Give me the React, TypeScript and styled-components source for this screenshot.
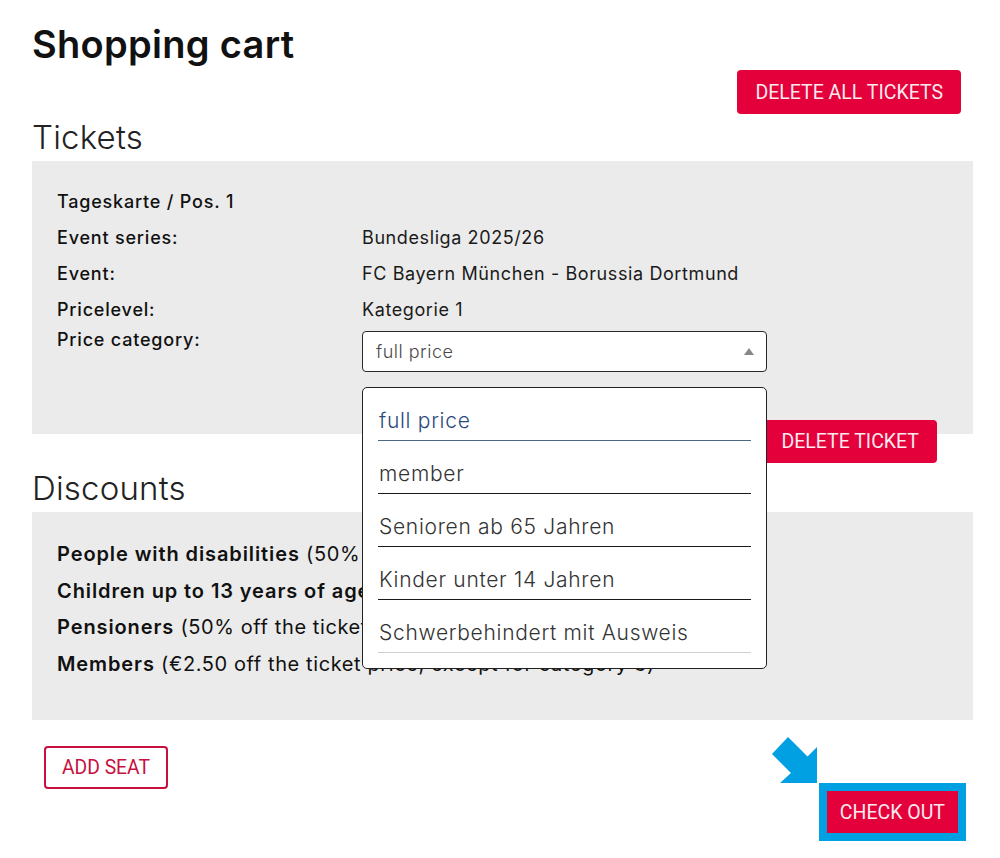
import styled, { createGlobalStyle } from "styled-components";

const GlobalStyle = createGlobalStyle`
  body {
    margin: 0;
    background: #fff;
    font-family: Inter, "Noto Sans", sans-serif;
    color: #111;
  }
`;

const Page = styled.div`
  width: 941px;
  padding: 22px 27px 0 32px;
`;

const Title = styled.h1`
  margin: 0;
  font-size: 38px;
  line-height: 44px;
  font-weight: 600;
  letter-spacing: 0.3px;
`;

const TopActions = styled.div`
  display: flex;
  justify-content: flex-end;
  padding-right: 12px;
  margin-top: 4px;
`;

const SectionTitle = styled.h2<{ $gap?: number }>`
  margin: ${(p) => p.$gap ?? 0}px 0 0;
  font-size: 33px;
  line-height: 47px;
  font-weight: 300;
  letter-spacing: 0.2px;
  color: #222;
`;

const RedButton = styled.button`
  background: #e4003b;
  color: #fbe9ee;
  border: none;
  border-radius: 4px;
  font-family: Roboto, "Liberation Sans", sans-serif;
  font-size: 19.5px;
  padding: 0 18px;
  height: 44px;
  cursor: pointer;
`;

const OutlineButton = styled.button`
  background: #fff;
  color: #c8103f;
  border: 2px solid #c8103f;
  border-radius: 4px;
  font-family: Roboto, "Liberation Sans", sans-serif;
  font-size: 19.3px;
  padding: 0 16px;
  height: 43px;
  cursor: pointer;
`;

const Panel = styled.div<{ $pad: string }>`
  position: relative;
  background: #ebebeb;
  padding: ${(p) => p.$pad};
`;

const InfoGrid = styled.div`
  display: grid;
  grid-template-columns: 305px 405px;
  align-items: start;
  font-size: 18px;
`;

const Label = styled.div<{ $lh?: number }>`
  font-weight: 500;
  letter-spacing: 0.8px;
  line-height: ${(p) => p.$lh ?? 36}px;
`;

const Value = styled.div`
  line-height: 36px;
  font-weight: 400;
  letter-spacing: 0.6px;
  color: #1a1a1a;
`;

const SelectWrap = styled.div`
  position: relative;
  margin-top: 3px;
`;

const SelectBox = styled.div`
  height: 39px;
  border: 1px solid #2a2a2a;
  border-radius: 4px;
  background: #fff;
  display: flex;
  align-items: center;
  justify-content: space-between;
  padding: 0 12px 0 13px;
  font-size: 18px;
  font-weight: 300;
  letter-spacing: 0.5px;
  color: #4a4a4a;
`;

const Caret = styled.span`
  width: 0;
  height: 0;
  border-left: 5px solid transparent;
  border-right: 5px solid transparent;
  border-bottom: 7px solid #888;
`;

const Dropdown = styled.ul`
  position: absolute;
  top: calc(100% + 15px);
  left: 0;
  right: 0;
  z-index: 5;
  margin: 0;
  list-style: none;
  background: #fff;
  border: 1px solid #222;
  border-radius: 5px;
  padding: 0 15px 15px;
`;

const Option = styled.li<{ $state: "active" | "normal" | "faded" }>`
  padding: 19px 0 5px 1px;
  line-height: 28px;
  font-size: 21px;
  font-weight: 300;
  letter-spacing: 0.7px;
  color: ${(p) => (p.$state === "active" ? "#2b4a7c" : "#333")};
  border-bottom: 1.5px solid
    ${(p) =>
      p.$state === "active" ? "#4d6789" : p.$state === "faded" ? "#cfcfcf" : "#1a1a1a"};
`;

const DeleteTicket = styled(RedButton)`
  position: absolute;
  right: 36px;
  bottom: -29px;
  height: 43px;
`;

const DiscountLine = styled.p`
  margin: 0;
  font-size: 20px;
  line-height: 36.5px;
  letter-spacing: 0.6px;
  color: #111;

  strong {
    font-weight: 600;
    letter-spacing: 0.9px;
  }
`;

const Footer = styled.div`
  display: flex;
  justify-content: space-between;
  align-items: flex-start;
  padding: 26px 7px 0 12px;
`;

const CheckoutArea = styled.div`
  position: relative;
  margin-top: 37px;
`;

const Highlight = styled.div`
  background: #00a0e3;
  padding: 8px;
`;

const CheckoutButton = styled(RedButton)`
  border-radius: 0;
  height: 42px;
  padding: 0 13px;
`;

const Arrow = styled.svg`
  position: absolute;
  left: -49px;
  top: -48px;
`;

const options = [
  { text: "full price", state: "active" as const },
  { text: "member", state: "normal" as const },
  { text: "Senioren ab 65 Jahren", state: "normal" as const },
  { text: "Kinder unter 14 Jahren", state: "normal" as const },
  { text: "Schwerbehindert mit Ausweis", state: "faded" as const },
];

const discounts = [
  ["People with disabilities", "(50% off the ticket price)"],
  ["Children up to 13 years of age", "(50% off the ticket price)"],
  ["Pensioners", "(50% off the ticket price)"],
  ["Members", "(€2.50 off the ticket price, except for category 3)"],
];

export default function App() {
  return (
    <Page>
      <GlobalStyle />
      <Title>Shopping cart</Title>
      <TopActions>
        <RedButton>DELETE ALL TICKETS</RedButton>
      </TopActions>
      <SectionTitle>Tickets</SectionTitle>
      <Panel $pad="23px 25px 62px">
        <InfoGrid>
          <Label>Tageskarte / Pos. 1</Label>
          <div />
          <Label>Event series:</Label>
          <Value>Bundesliga 2025/26</Value>
          <Label>Event:</Label>
          <Value>FC Bayern München - Borussia Dortmund</Value>
          <Label>Pricelevel:</Label>
          <Value>Kategorie 1</Value>
          <Label $lh={24}>Price category:</Label>
          <SelectWrap>
            <SelectBox>
              full price
              <Caret />
            </SelectBox>
            <Dropdown>
              {options.map((o) => (
                <Option key={o.text} $state={o.state}>
                  {o.text}
                </Option>
              ))}
            </Dropdown>
          </SelectWrap>
        </InfoGrid>
        <DeleteTicket>DELETE TICKET</DeleteTicket>
      </Panel>
      <SectionTitle $gap={31}>Discounts</SectionTitle>
      <Panel $pad="24px 25px 38px">
        {discounts.map(([b, rest]) => (
          <DiscountLine key={b}>
            <strong>{b}</strong> {rest}
          </DiscountLine>
        ))}
      </Panel>
      <Footer>
        <OutlineButton>ADD SEAT</OutlineButton>
        <CheckoutArea>
          <Arrow width="48" height="50" viewBox="0 0 48 50">
            <polygon
              points="18,2 37.5,21.5 47,12 47,48 10,48 21,38 2,19"
              fill="#00a0e3"
            />
          </Arrow>
          <Highlight>
            <CheckoutButton>CHECK OUT</CheckoutButton>
          </Highlight>
        </CheckoutArea>
      </Footer>
    </Page>
  );
}
